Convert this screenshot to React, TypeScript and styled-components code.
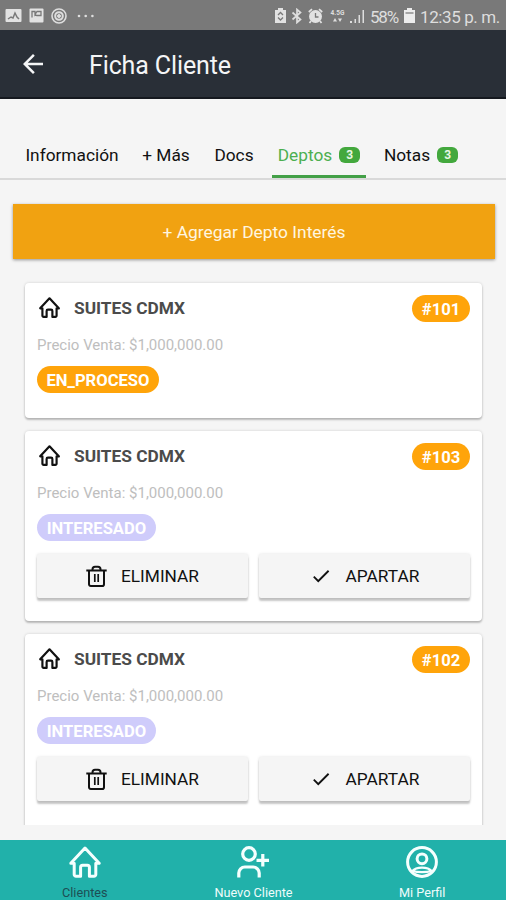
import React from 'react';
import styled, { createGlobalStyle } from 'styled-components';
import { MdArrowBack, MdCheck } from 'react-icons/md';

const Global = createGlobalStyle`
  * { box-sizing: border-box; }
  body { margin: 0; background: #f5f5f5; font-family: Roboto, sans-serif; }
  button { font-family: inherit; border: 0; padding: 0; }
`;

const Screen = styled.div`
  width: 506px;
  height: 900px;
  display: flex;
  flex-direction: column;
  overflow: hidden;
  background: #f5f5f5;
`;

const StatusBar = styled.div`
  height: 30px;
  flex: none;
  display: flex;
  align-items: center;
  padding: 1px 6px 0 5px;
  background: #797979;
  color: #dedede;
`;

const StatusGroup = styled.div<{ $end?: boolean }>`
  display: flex;
  align-items: center;
  gap: ${p => (p.$end ? 5 : 7)}px;
  margin-left: ${p => (p.$end ? 'auto' : 0)};
  svg { flex: none; }
`;

const StatusText = styled.span<{ $width: number; $spacing: number }>`
  width: ${p => p.$width}px;
  padding-top: 2px;
  font-size: 17px;
  line-height: 20px;
  white-space: nowrap;
  letter-spacing: ${p => p.$spacing}px;
`;

const Header = styled.header`
  height: 69px;
  flex: none;
  display: flex;
  align-items: center;
  padding: 1px 0 0 18px;
  background: #292f37;
  border-bottom: 2px solid #15191f;
  color: #f4f5f6;
`;

const Title = styled.h1`
  margin: 4px 0 0 41px;
  font-size: 25px;
  font-weight: 400;
  line-height: 30px;
  letter-spacing: -0.12px;
`;

const Tabs = styled.nav`
  height: 81px;
  flex: none;
  display: flex;
  align-items: flex-end;
  padding-left: 19px;
  border-bottom: 2px solid #d9d9d9;
`;

const Tab = styled.div<{ $width: number; $active?: boolean }>`
  width: ${p => p.$width}px;
  height: 46px;
  display: flex;
  align-items: center;
  justify-content: center;
  gap: 7px;
  padding-top: 2px;
  margin-left: ${p => (p.$active ? 11 : 0)}px;
  font-size: 17.3px;
  white-space: nowrap;
  color: ${p => (p.$active ? '#4caf50' : '#111')};
  border-bottom: 3px solid ${p => (p.$active ? '#43a047' : 'transparent')};
`;

const Count = styled.span`
  width: 21px;
  height: 16px;
  border-radius: 6px;
  background: #43a83d;
  color: #e9f7e6;
  font-size: 12px;
  font-weight: 700;
  line-height: 16px;
  text-align: center;
`;

const AddButton = styled.button`
  height: 55px;
  flex: none;
  margin: 24px 11px 0 13px;
  background: #f1a211;
  color: #fff6e0;
  font-size: 17.4px;
  box-shadow: 0 1px 3px rgba(0, 0, 0, 0.4);
`;

const List = styled.main`
  height: 566px;
  flex: none;
  overflow: hidden;
  display: flex;
  flex-direction: column;
  gap: 13px;
  padding: 24px 24px 0 25px;
`;

const Card = styled.article<{ $height: number }>`
  height: ${p => p.$height}px;
  flex: none;
  padding: 12px 12px 0;
  border-radius: 4px;
  background: #fff;
  box-shadow: 0 2px 2px rgba(0, 0, 0, 0.22), 0 0 3px rgba(0, 0, 0, 0.16);
`;

const CardHead = styled.div`
  height: 27px;
  display: flex;
  align-items: center;
  padding-left: 2px;
  color: #111;
  > svg { margin-top: -3px; }
`;

const CardTitle = styled.h2`
  margin: -2px auto 0 14px;
  color: #4b4b4b;
  font-size: 17.3px;
  line-height: 24px;
  font-weight: 700;
`;

const Pill = styled.span<{ $tone: 'orange' | 'lilac'; $width: number }>`
  display: block;
  width: ${p => p.$width}px;
  height: 27px;
  border-radius: 14px;
  background: ${p => (p.$tone === 'orange' ? '#ffa40a' : '#cfccfb')};
  color: #fff;
  font-size: 16.6px;
  font-weight: 700;
  line-height: 29px;
  text-align: center;
  white-space: nowrap;
`;

const Price = styled.p`
  margin: 13px 0 11px;
  color: #bebebe;
  font-size: 15px;
  line-height: 20px;
`;

const Actions = styled.div`
  display: flex;
  gap: 11px;
  margin-top: 13px;
`;

const Action = styled.button`
  width: 211px;
  height: 44px;
  display: flex;
  align-items: center;
  justify-content: center;
  gap: 14px;
  border-radius: 2px;
  background: #f5f5f5;
  color: #111;
  font-size: 17.3px;
  box-shadow: 0 3px 2px rgba(0, 0, 0, 0.22), 0 0 3px rgba(0, 0, 0, 0.12);
`;

const BottomNav = styled.nav`
  height: 60px;
  flex: none;
  margin-top: auto;
  display: grid;
  grid-template-columns: repeat(3, 1fr);
  background: #21b1aa;
`;

const NavItem = styled.div<{ $active?: boolean }>`
  display: flex;
  flex-direction: column;
  align-items: center;
  gap: 7px;
  padding: 6px 0 0 1px;
  font-size: 12.7px;
  line-height: 15px;
  color: ${p => (p.$active ? '#1d4f55' : '#effcfb')};
  svg { color: #f5fffe; flex: none; }
`;

const HomeIcon = ({ size, weight = 3 }: { size: number; weight?: number }) => (
  <svg width={size} height={size} viewBox="0 0 32 32" fill="none" stroke="currentColor" strokeWidth={weight} strokeLinejoin="round" strokeLinecap="round">
    <path d="M5.200 17.300H1.800L16 2l14.200 15.300H26.800V28.500a1.800 1.800 0 0 1-1.800 1.800H20.400V21.300a2 2 0 0 0-2-2h-4.800a2 2 0 0 0-2 2v9H7a1.800 1.800 0 0 1-1.800-1.800z" />
  </svg>
);

const TrashIcon = () => (
  <svg width="21" height="22" viewBox="0 0 21 22" fill="none" stroke="currentColor" strokeWidth="2">
    <path d="M.3 5.500h20.400M6.500 5.500v-1.300a2.500 2.500 0 0 1 2.500-2.500h3a2.500 2.500 0 0 1 2.500 2.500v1.300M3 5.500v13.700a1.800 1.800 0 0 0 1.800 1.800h11.400a1.800 1.800 0 0 0 1.800-1.800v-13.700" />
    <path d="M8.800 9v8M12.200 9v8" strokeWidth="1.700" />
  </svg>
);

const UserPlusIcon = () => (
  <svg width="32" height="32" viewBox="0 0 32 32" fill="none" stroke="currentColor" strokeWidth="3.200">
    <circle cx="12" cy="8" r="6.300" />
    <path d="M1.800 31.500v-4.500a6 6 0 0 1 6-6h8.400a6 6 0 0 1 6 6v4.500M19.500 14.300h12.500M25.800 8v12.600" />
  </svg>
);

const ProfileIcon = () => (
  <svg width="32" height="32" viewBox="0 0 32 32" fill="none" stroke="currentColor" strokeWidth="3">
    <circle cx="16" cy="16" r="14.400" />
    <circle cx="16" cy="12.800" r="4.900" />
    <path d="M6.500 25c3.500-4.500 15.500-4.500 19 0-5 1.500-14 1.500-19 0z" strokeWidth="2.300" />
  </svg>
);

const Photo = () => (
  <svg width="17" height="15" viewBox="0 0 17 15">
    <rect x="0.5" y="1" width="16" height="13" rx="1" fill="#e2e2e2" />
    <path d="M3 11l3-2 2 1 2-5 2 4 2 2" fill="none" stroke="#797979" strokeWidth="1.500" />
  </svg>
);
const Board = () => (
  <svg width="15" height="15" viewBox="0 0 15 15">
    <rect x="0.5" y="0.5" width="14" height="14" rx="1" fill="#e2e2e2" />
    <path d="M3 9.500V3.500h3v3l2-3h4v4H8L5.500 7" fill="none" stroke="#797979" strokeWidth="1.300" />
  </svg>
);
const Target = () => (
  <svg width="16" height="16" viewBox="0 0 16 16" fill="none" stroke="#dedede">
    <circle cx="8" cy="8" r="7" strokeWidth="1.600" />
    <circle cx="8" cy="8" r="3.800" strokeWidth="2" />
    <circle cx="8" cy="8" r="1.500" fill="#dedede" />
  </svg>
);
const Dots = () => (
  <svg width="22" height="4" viewBox="0 0 22 4" fill="#dedede">
    <circle cx="5" cy="2" r="1.300" /><circle cx="11.700" cy="2" r="1.300" /><circle cx="18.400" cy="2" r="1.300" />
  </svg>
);
const Saver = () => (
  <svg width="11" height="15" viewBox="0 0 11 15">
    <path d="M3 0h5v2h3v13H0V2h3z" fill="#e2e2e2" />
    <path d="M3 7l2.500-2.500L8 7M3 9.500l2.500 2.500L8 9.500" fill="none" stroke="#797979" strokeWidth="1.300" />
  </svg>
);
const Bluetooth = () => (
  <svg width="12" height="16" viewBox="0 0 12 16" fill="none" stroke="#dedede" strokeWidth="1.700">
    <path d="M1.500 4.500l8 7L6 14.500V1.500l3.500 3-8 7" />
  </svg>
);
const Alarm = () => (
  <svg width="15" height="16" viewBox="0 0 15 16">
    <circle cx="7.500" cy="8.500" r="6.500" fill="#e2e2e2" />
    <path d="M.8 4L4 1.200M14.200 4L11 1.200M3 13l-1.500 2M12 13l1.500 2" stroke="#e2e2e2" strokeWidth="1.700" />
    <path d="M7.500 5v4h3" fill="none" stroke="#797979" strokeWidth="1.300" />
  </svg>
);
const NetworkBox = styled.span`
  width: 15px;
  margin-left: 2px;
  display: flex;
  flex-direction: column;
  align-items: center;
  gap: 1px;
  font-size: 6.5px;
  font-weight: 700;
  line-height: 7px;
`;
const Network = () => (
  <NetworkBox>
    4.5G
    <svg width="9" height="4" viewBox="0 0 9 4" fill="#dedede"><path d="M0 3.500L2 0l2 3.500zM5 .5h4L7 4z" /></svg>
  </NetworkBox>
);
const Signal = () => (
  <svg width="15" height="14" viewBox="0 0 15 14" fill="#dedede">
    <path d="M0 12h2v2H0zM4.500 10h1.500v4H4.500zM8.500 6h1.500v8H8.500zM12.500 1H14v13h-1.500z" />
  </svg>
);
const Battery = () => (
  <svg width="11" height="15" viewBox="0 0 11 15">
    <path d="M3 0h5v2h3v13H0V2h3z" fill="#ececec" />
    <path d="M1.500 4h8v2h-8z" fill="#a5a5a5" />
  </svg>
);

const tabs = [
  { label: 'Información', width: 106 },
  { label: '+ Más', width: 82 },
  { label: 'Docs', width: 54 },
  { label: 'Deptos', width: 94, count: 3, active: true },
  { label: 'Notas', width: 110, count: 3 },
];

const units = [
  { number: '#101', pending: true, height: 135 },
  { number: '#103', pending: false, height: 190 },
  { number: '#102', pending: false, height: 200 },
];

export default function App() {
  return (
    <Screen>
      <Global />
      <StatusBar>
        <StatusGroup>
          <Photo /><Board /><Target />
          <Dots />
        </StatusGroup>
        <StatusGroup $end>
          <Saver />
          <Bluetooth />
          <Alarm />
          <Network />
          <Signal />
          <StatusText $width={29} $spacing={-1.2}>58%</StatusText>
          <Battery />
          <StatusText $width={80} $spacing={-0.4}>12:35 p. m.</StatusText>
        </StatusGroup>
      </StatusBar>
      <Header>
        <MdArrowBack size={30} />
        <Title>Ficha Cliente</Title>
      </Header>
      <Tabs>
        {tabs.map(t => (
          <Tab key={t.label} $width={t.width} $active={t.active}>
            {t.label}
            {t.count && <Count>{t.count}</Count>}
          </Tab>
        ))}
      </Tabs>
      <AddButton>+ Agregar Depto Interés</AddButton>
      <List>
        {units.map(u => (
          <Card key={u.number} $height={u.height}>
            <CardHead>
              <HomeIcon size={21} weight={3.3} />
              <CardTitle>SUITES CDMX</CardTitle>
              <Pill $tone="orange" $width={58}>{u.number}</Pill>
            </CardHead>
            <Price>Precio Venta: $1,000,000.00</Price>
            <Pill $tone={u.pending ? 'orange' : 'lilac'} $width={u.pending ? 122 : 119}>
              {u.pending ? 'EN_PROCESO' : 'INTERESADO'}
            </Pill>
            {!u.pending && (
              <Actions>
                <Action><TrashIcon />ELIMINAR</Action>
                <Action><MdCheck size={22} />APARTAR</Action>
              </Actions>
            )}
          </Card>
        ))}
      </List>
      <BottomNav>
        <NavItem $active><HomeIcon size={32} />Clientes</NavItem>
        <NavItem><UserPlusIcon />Nuevo Cliente</NavItem>
        <NavItem><ProfileIcon />Mi Perfil</NavItem>
      </BottomNav>
    </Screen>
  );
}
